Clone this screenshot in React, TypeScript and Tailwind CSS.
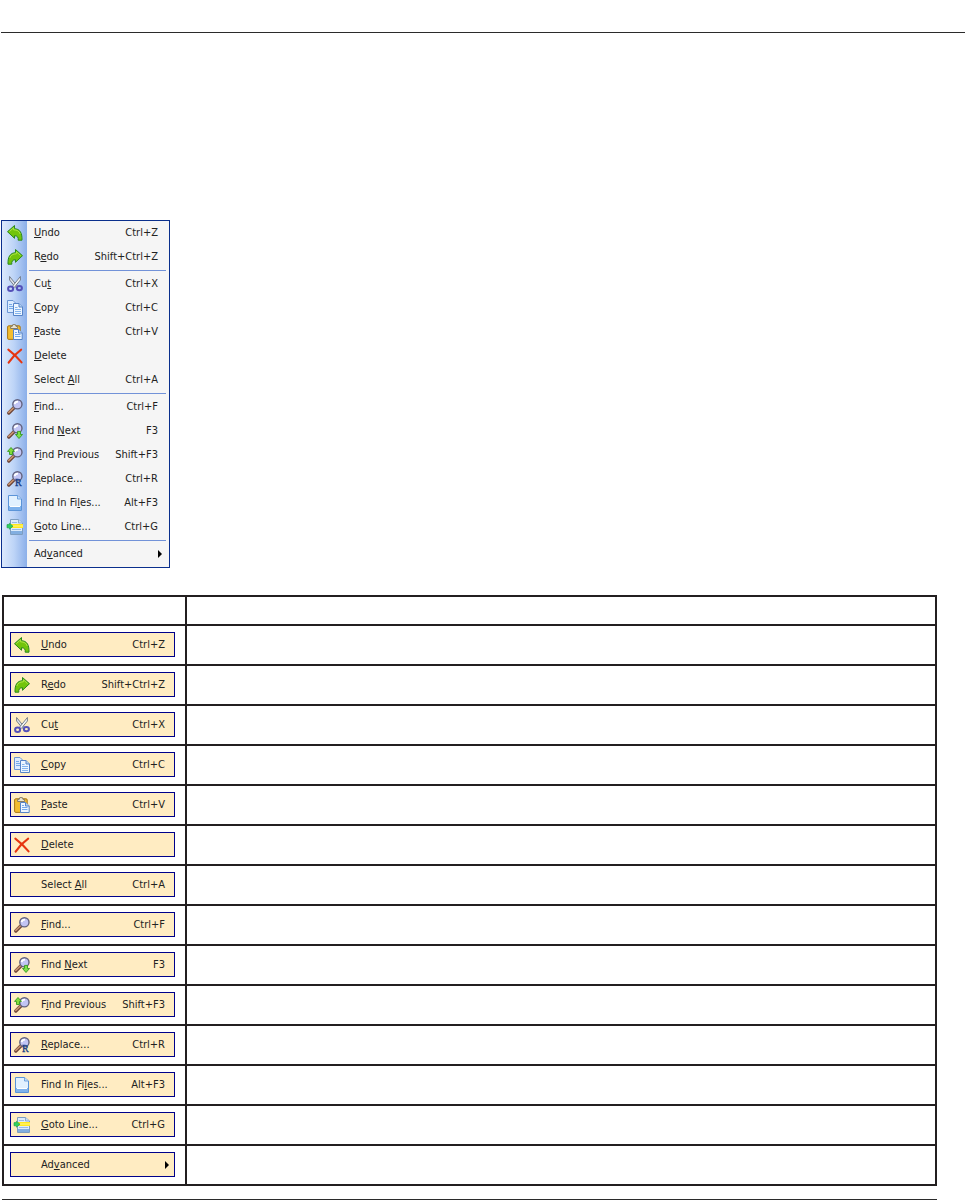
import React from "react";
import clsx from "clsx";

type IconName =
  | "undo"
  | "redo"
  | "cut"
  | "copy"
  | "paste"
  | "delete"
  | "find"
  | "findNext"
  | "findPrevious"
  | "replace"
  | "findInFiles"
  | "gotoLine";

interface Command {
  // "&" marks the access key, as in a menu resource
  label: string;
  shortcut?: string;
  icon?: IconName;
  submenu?: boolean;
}

const groups: Command[][] = [
  [
    { label: "&Undo", shortcut: "Ctrl+Z", icon: "undo" },
    { label: "R&edo", shortcut: "Shift+Ctrl+Z", icon: "redo" },
  ],
  [
    { label: "Cu&t", shortcut: "Ctrl+X", icon: "cut" },
    { label: "&Copy", shortcut: "Ctrl+C", icon: "copy" },
    { label: "&Paste", shortcut: "Ctrl+V", icon: "paste" },
    { label: "&Delete", icon: "delete" },
    { label: "Select &All", shortcut: "Ctrl+A" },
  ],
  [
    { label: "&Find...", shortcut: "Ctrl+F", icon: "find" },
    { label: "Find &Next", shortcut: "F3", icon: "findNext" },
    { label: "F&ind Previous", shortcut: "Shift+F3", icon: "findPrevious" },
    { label: "&Replace...", shortcut: "Ctrl+R", icon: "replace" },
    { label: "Find In Fi&les...", shortcut: "Alt+F3", icon: "findInFiles" },
    { label: "&Goto Line...", shortcut: "Ctrl+G", icon: "gotoLine" },
  ],
  [{ label: "Ad&vanced", submenu: true }],
];

const UndoArrow = () => (
  <>
    <path
      d="M7.5.5v3.2c5 .2 7.8 3.6 7.5 11.5h-3.8c.4-3-.8-4.4-3.7-4.5v2.6L.5 6.7z"
      fill="#72c40c"
      stroke="#2a8a1c"
      strokeLinejoin="round"
    />
    <path d="M2.4 6.6 6.6 2.8v2c3.6.1 5.6 1.3 6.6 4.2" stroke="#b4e848" strokeWidth=".9" />
  </>
);

const Lens = () => (
  <>
    <path d="M7 8.8 1.8 14" stroke="#6b4234" strokeWidth="3.4" strokeLinecap="round" />
    <path d="M6.8 8.6 1.8 13.4" stroke="#c99470" strokeWidth="1.6" strokeLinecap="round" />
    <circle cx="10.4" cy="5.3" r="4.6" fill="#c2c5f4" stroke="#62627e" strokeWidth="1.4" />
    <path d="M7.6 5.2c.3-1.7 1.5-2.5 3.4-2.5" stroke="#fff" strokeWidth="1.8" fill="none" />
  </>
);

const icons: Record<IconName, React.ReactNode> = {
  undo: <UndoArrow />,
  redo: (
    <g transform="matrix(-1 0 0 1 16 0)">
      <UndoArrow />
    </g>
  ),
  cut: (
    <>
      <path d="M2.6.5 10.8 10.6l-2 1L2.6 4z" fill="#dfe3ea" stroke="#6b7380" strokeWidth=".9" />
      <path d="M13.4.5 5.2 10.6l2 1L13.4 4z" fill="#f4f6f8" stroke="#6b7380" strokeWidth=".9" />
      <ellipse cx="3.6" cy="12.7" rx="2.5" ry="2.2" fill="none" stroke="#5450b8" strokeWidth="2" />
      <ellipse cx="12.4" cy="12.1" rx="2.5" ry="2.2" fill="none" stroke="#5450b8" strokeWidth="2" />
    </>
  ),
  copy: (
    <>
      <path d="M.5.5h5.5l3 3v9H.5z" fill="#dcecff" stroke="#6c96d4" />
      <path d="M2 4.5h3M2 6.5h4M2 8.5h4" stroke="#76aae8" />
      <path d="M6.5 3.5H12l3.5 3.5v8.5h-9z" fill="#edf6ff" stroke="#5684c8" />
      <path d="M12 3.5V7h3.5" fill="#b6d2f2" stroke="#5684c8" />
      <path d="M8 7.5h2.5M8 9.5h6M8 11.5h6M8 13.5h6" stroke="#84b4ee" />
    </>
  ),
  paste: (
    <>
      <rect x=".6" y="1.8" width="12.6" height="13.6" rx="1.2" fill="#f3bd2e" stroke="#a77516" />
      <path d="M3.6 4.5V2.4h1.6L5.8.6h2.6L9 2.4h1.6v2.1z" fill="#e9e4d2" stroke="#7d7462" strokeWidth=".9" />
      <path d="M6.5 5.5h5.2L15.2 9v6.5H6.5z" fill="#eef6ff" stroke="#5684c8" />
      <path d="M11.5 5.5V9h3.7" fill="#b6d2f2" stroke="#5684c8" />
      <path d="M8 8.5h2M8 10.5h5.5M8 12.5h5.5" stroke="#74a8ea" />
    </>
  ),
  delete: (
    <path
      d="M1.3 1.6C5 4.4 10.5 9.4 14.6 14.4M14.2 1.6C9 5.3 4.8 9.8 1.6 14.6"
      stroke="#e63510"
      strokeWidth="2"
      strokeLinecap="round"
      fill="none"
    />
  ),
  find: <Lens />,
  findNext: (
    <>
      <Lens />
      <path
        d="M10.5 8.4h3v3.1h2L12 15.5l-3.5-4h2z"
        fill="#7ee04a"
        stroke="#349820"
        strokeWidth=".9"
        strokeLinejoin="round"
      />
    </>
  ),
  findPrevious: (
    <>
      <Lens />
      <path
        d="M2.5 7.5h3V4.4h2L4 .5.5 4.4h2z"
        fill="#84da3c"
        stroke="#349820"
        strokeWidth=".9"
        strokeLinejoin="round"
      />
    </>
  ),
  replace: (
    <>
      <Lens />
      <text
        x="8"
        y="15"
        fontFamily="Liberation Serif, serif"
        fontSize="10"
        fill="#163c84"
        stroke="#163c84"
        strokeWidth=".3"
      >
        R
      </text>
    </>
  ),
  findInFiles: (
    <>
      <path d="M1.5.5h9L14.5 4v11.5h-13z" fill="#e2f1ff" stroke="#5b94d8" />
      <path d="M2 11h12v4H2z" fill="#7fb2ec" />
      <path d="M3 11.5h10" stroke="#fff" />
      <path d="M10.5.5V4h4" fill="#c4def8" stroke="#5b94d8" strokeWidth=".8" />
    </>
  ),
  gotoLine: (
    <>
      <path d="M3.5.5h8L15.5 4v11.5h-12z" fill="#dcebfa" stroke="#7d9dc0" />
      <path d="M5 3.5h5M5 10.5h9" stroke="#9bbce0" />
      <path d="M4 12h11v3H4z" fill="#82aee0" />
      <path d="M11.5.5V4h4" fill="#c4def8" stroke="#7d9dc0" strokeWidth=".8" />
      <path d="M3 5h13v4H3z" fill="#ffe81c" />
      <path d="M4 7h12" stroke="#fff68a" />
      <path d="M0 5.6h2.4V4.2L6 7.2l-3.6 3V8.8H0z" fill="#2fd160" stroke="#1b9a42" strokeWidth=".6" />
    </>
  ),
};

function Label({ text }: { text: string }) {
  const at = text.indexOf("&");
  return (
    <span className="whitespace-nowrap">
      {text.slice(0, at)}
      <u className="underline-offset-1">{text[at + 1]}</u>
      {text.slice(at + 2)}
    </span>
  );
}

function CommandButton({ command, boxed = false }: { command: Command; boxed?: boolean }) {
  return (
    <button
      type="button"
      role={boxed ? undefined : "menuitem"}
      className={clsx(
        "flex items-center gap-[11px] w-full text-left text-[#222] text-[11px] leading-4",
        boxed
          ? "h-[25px] pl-[3px] pr-[9px] border border-[#00008b] bg-[#ffecc2]"
          : "h-6 pl-[5px] pr-[11px]"
      )}
    >
      <svg
        viewBox="0 0 16 16"
        className="w-4 h-4 shrink-0 overflow-visible"
        fill="none"
        aria-hidden="true"
      >
        {command.icon && icons[command.icon]}
      </svg>
      <Label text={command.label} />
      {command.shortcut && <span className="ml-auto whitespace-nowrap">{command.shortcut}</span>}
      {command.submenu && (
        <svg viewBox="0 0 4 8" className="w-1 h-2 ml-auto -mr-1" aria-hidden="true">
          <path d="M0 0l4 4-4 4z" fill="#000" />
        </svg>
      )}
    </button>
  );
}

function EditMenu() {
  return (
    <div
      role="menu"
      aria-label="Edit"
      className="w-[169px] pb-px border border-[#0a2f8c] bg-[linear-gradient(to_right,#dce9fc_0,#bdd4f7_12px,#8bafe9_25px,#f5f5f5_25px)]"
    >
      {groups.map((group, index) => (
        <React.Fragment key={index}>
          {index > 0 && (
            <div role="separator" className="h-[3px] py-px ml-[27px] mr-[3px]">
              <div className="h-px bg-[#7292d8]" />
            </div>
          )}
          {group.map((command) => (
            <CommandButton key={command.label} command={command} />
          ))}
        </React.Fragment>
      ))}
    </div>
  );
}

function CommandTable() {
  return (
    <table className="w-full table-fixed border-collapse">
      <thead>
        <tr className="h-[29px]">
          <th className="w-[183px] p-0 border-2 border-[#231f20]" />
          <th className="p-0 border-2 border-[#231f20]" />
        </tr>
      </thead>
      <tbody>
        {groups.flat().map((command) => (
          <tr key={command.label} className="h-10">
            <td className="pl-1.5 pt-1.5 pb-[7px] pr-[10px] border-2 border-[#231f20]">
              <CommandButton command={command} boxed />
            </td>
            <td className="border-2 border-[#231f20]" />
          </tr>
        ))}
      </tbody>
    </table>
  );
}

export default function App() {
  return (
    <div className="bg-white pt-8 font-['DejaVu_Sans_Condensed','DejaVu_Sans',sans-serif]">
      <hr className="mx-px border-0 h-px bg-[#2b2b2b]" />
      <main className="pt-[187px] pl-px">
        <EditMenu />
        <div className="mt-[27px] ml-px mr-[29px]">
          <CommandTable />
          <hr className="mt-[13px] border-0 h-px bg-[#2b2b2b]" />
        </div>
      </main>
    </div>
  );
}
